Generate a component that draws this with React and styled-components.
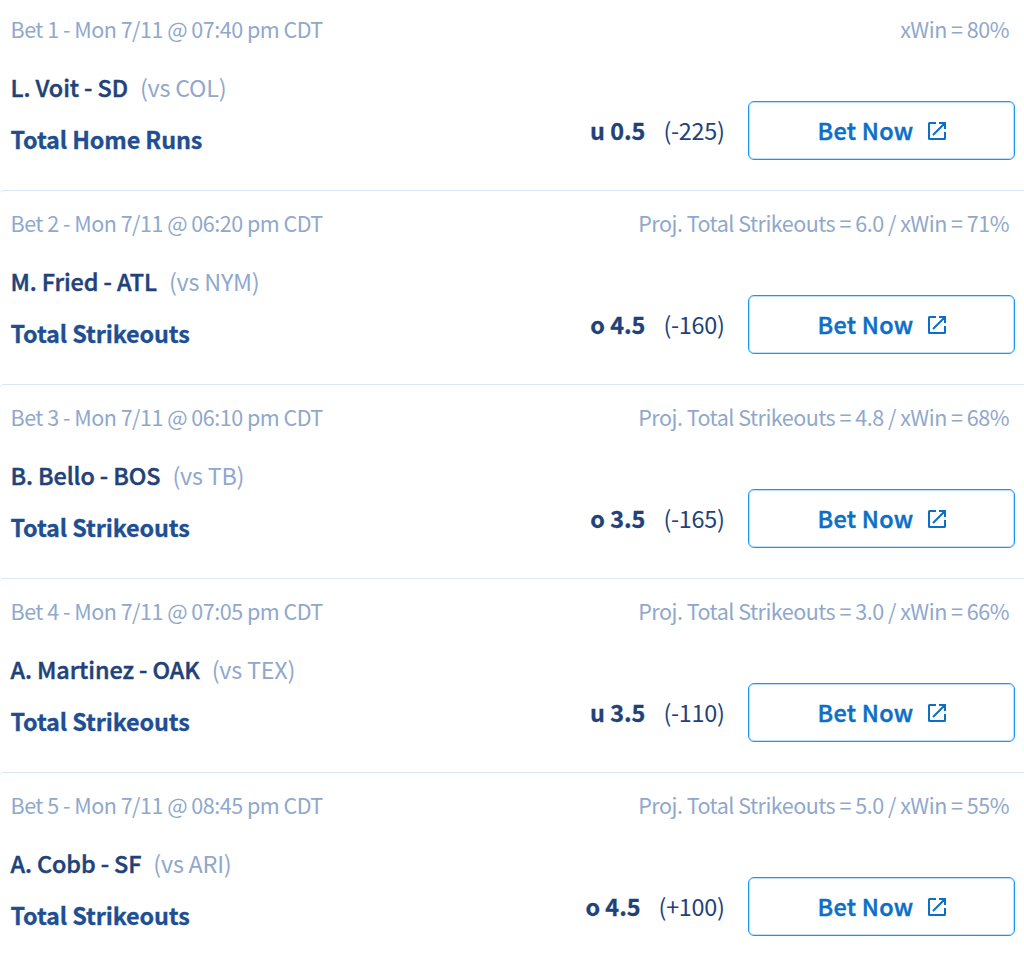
import React from "react";
import styled, { createGlobalStyle } from "styled-components";

const Global = createGlobalStyle`
  *, *::before, *::after { box-sizing: border-box; }
  body { margin: 0; background: #fff; font-family: "Noto Sans CJK SC", "Noto Sans", sans-serif; }
`;

const List = styled.main`
  display: flex;
  flex-direction: column;
  width: 1024px;
  height: 966px;
  overflow: hidden;
`;

const Row = styled.section`
  height: ${({ $first }) => ($first ? 190 : 194)}px;
  flex: none;
  padding: ${({ $first }) => ($first ? 13 : 16)}px 9px 0 10.5px;
  border-top: ${({ $first }) => ($first ? "0" : "1px solid #d9e7f4")};
  border-top-left-radius: 4px;
`;

const Meta = styled.header`
  display: flex;
  justify-content: space-between;
  padding-right: 6px;
  font-size: 21.5px;
  letter-spacing: -0.5px;
  line-height: 32px;
  color: #8fa8cc;
  white-space: nowrap;
`;

const Body = styled.div`
  display: flex;
  justify-content: space-between;
  padding-top: 16px;
`;

const Names = styled.div`
  display: flex;
  flex-direction: column;
  white-space: nowrap;
`;

const Player = styled.div`
  font-size: 23.4px;
  font-weight: 500;
  letter-spacing: -0.1px;
  line-height: 52px;
  color: #1f4279;
  -webkit-text-stroke: 0.45px currentColor;
`;

const Versus = styled.span`
  margin-left: 12px;
  font-weight: 400;
  letter-spacing: -0.25px;
  color: #8fa8cc;
  -webkit-text-stroke: 0;
`;

const Market = styled(Player)`
  font-weight: 700;
  letter-spacing: -0.13px;
  color: #1f4f92;
  -webkit-text-stroke-width: 0.3px;
`;

const Action = styled.div`
  display: flex;
  align-items: center;
  height: 59px;
  margin-top: 40px;
  color: #1f4279;
  font-size: 23.4px;
  white-space: nowrap;
`;

const Line = styled.span`
  padding-bottom: 2px;
  font-weight: 700;
  -webkit-text-stroke: 0.3px currentColor;
`;

const Odds = styled.span`
  margin: 0 23.5px 0 18px;
  padding-bottom: 2px;
  letter-spacing: -0.3px;
`;

const BetButton = styled.button`
  display: flex;
  align-items: center;
  justify-content: center;
  gap: 13px;
  width: 267px;
  height: 59px;
  padding: 0 0 0 1px;
  border: 1px solid #1b95f5;
  border-radius: 6px;
  box-shadow: inset 0 0 0 1px #1b95f548;
  background: #fff;
  color: #0b6fc7;
  font: 500 23.4px "Noto Sans CJK SC", sans-serif;
  letter-spacing: 0.3px;
`;

const ButtonLabel = styled.span`
  padding-bottom: 2px;
  -webkit-text-stroke: 0.45px currentColor;
`;

const Icon = () => (
  <svg width="20" height="20" viewBox="0 0 20 20" fill="none" stroke="currentColor" strokeWidth="2">
    <path d="M9 2H2.600Q2 2 2 2.600V17.400Q2 18 2.600 18H17.400Q18 18 18 17.400V11M12 2h6v6M18 2L6 14" />
  </svg>
);

const bets = [
  ["07:40", "xWin = 80%", "L. Voit - SD", "COL", "Total Home Runs", "u 0.5", "-225"],
  ["06:20", "Proj. Total Strikeouts = 6.0 / xWin = 71%", "M. Fried - ATL", "NYM", "Total Strikeouts", "o 4.5", "-160"],
  ["06:10", "Proj. Total Strikeouts = 4.8 / xWin = 68%", "B. Bello - BOS", "TB", "Total Strikeouts", "o 3.5", "-165"],
  ["07:05", "Proj. Total Strikeouts = 3.0 / xWin = 66%", "A. Martinez - OAK", "TEX", "Total Strikeouts", "u 3.5", "-110"],
  ["08:45", "Proj. Total Strikeouts = 5.0 / xWin = 55%", "A. Cobb - SF", "ARI", "Total Strikeouts", "o 4.5", "+100"],
];

export default function App() {
  return (
    <List>
      <Global />
      {bets.map(([time, projection, player, rival, market, line, odds], i) => (
        <Row key={player} $first={i === 0}>
          <Meta>
            <span>{`Bet ${i + 1} - Mon 7/11 @ ${time} pm CDT`}</span>
            <span>{projection}</span>
          </Meta>
          <Body>
            <Names>
              <Player>{player}<Versus>{`(vs ${rival})`}</Versus></Player>
              <Market>{market}</Market>
            </Names>
            <Action>
              <Line>{line}</Line>
              <Odds>{`(${odds})`}</Odds>
              <BetButton><ButtonLabel>Bet Now</ButtonLabel><Icon /></BetButton>
            </Action>
          </Body>
        </Row>
      ))}
    </List>
  );
}
